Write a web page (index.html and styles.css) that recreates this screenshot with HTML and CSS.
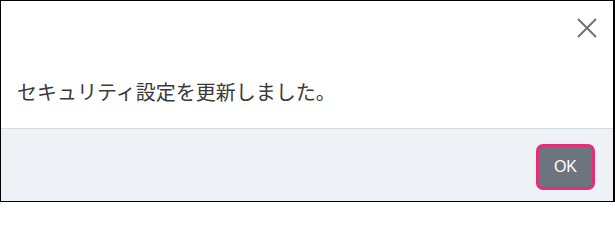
FILE: index.html
```html
<!DOCTYPE html>
<html lang="ja">
<head>
<meta charset="utf-8">
<link rel="stylesheet" href="styles.css">
</head>
<body>
<div class="modal">
  <div class="modal-top">
    <div class="modal-header">
      <button class="close" aria-label="閉じる">
        <svg width="20" height="20" viewBox="0 0 20 20"><path d="M1 1 L19 19 M19 1 L1 19" stroke="#737373" stroke-width="2" fill="none"/></svg>
      </button>
    </div>
    <div class="modal-body">セキュリティ設定を更新しました。</div>
  </div>
  <div class="modal-footer">
    <button class="btn-ok">OK</button>
  </div>
</div>
</body>
</html>
```

FILE: styles.css
```css
html, body {
  margin: 0;
  padding: 0;
  background: #fff;
}
.modal {
  width: 615px;
  height: 202px;
  box-sizing: border-box;
  border: 1px solid #000;
  border-right-width: 2px;
  background: #fff;
  display: flex;
  flex-direction: column;
  font-family: "Noto Sans CJK JP", "Noto Sans", sans-serif;
}
.modal-top {
  height: 127px;
  display: flex;
  flex-direction: column;
}
.modal-header {
  height: 54px;
  display: flex;
  justify-content: flex-end;
  align-items: center;
  padding-right: 16px;
}
.close {
  border: 0;
  background: none;
  padding: 0;
  width: 20px;
  height: 20px;
  display: flex;
}
.modal-body {
  margin-top: 22px;
  padding: 0 16px;
  font-size: 20px;
  line-height: 30px;
  color: #3a3a3a;
}
.modal-footer {
  flex: 1;
  border-top: 1px solid #d6dbe0;
  background: #eef1f5;
  display: flex;
  justify-content: flex-end;
  align-items: flex-start;
  padding: 18px 21px 0 0;
}
.btn-ok {
  font-family: "Liberation Sans", Arial, sans-serif;
  font-size: 16px;
  line-height: 24px;
  height: 40px;
  padding: 7px 14px;
  box-sizing: border-box;
  border: 1px solid #6c757d;
  border-radius: 4px;
  background: #6c757d;
  color: #fff;
  box-shadow: 0 0 0 3px #e52e78;
}
```
